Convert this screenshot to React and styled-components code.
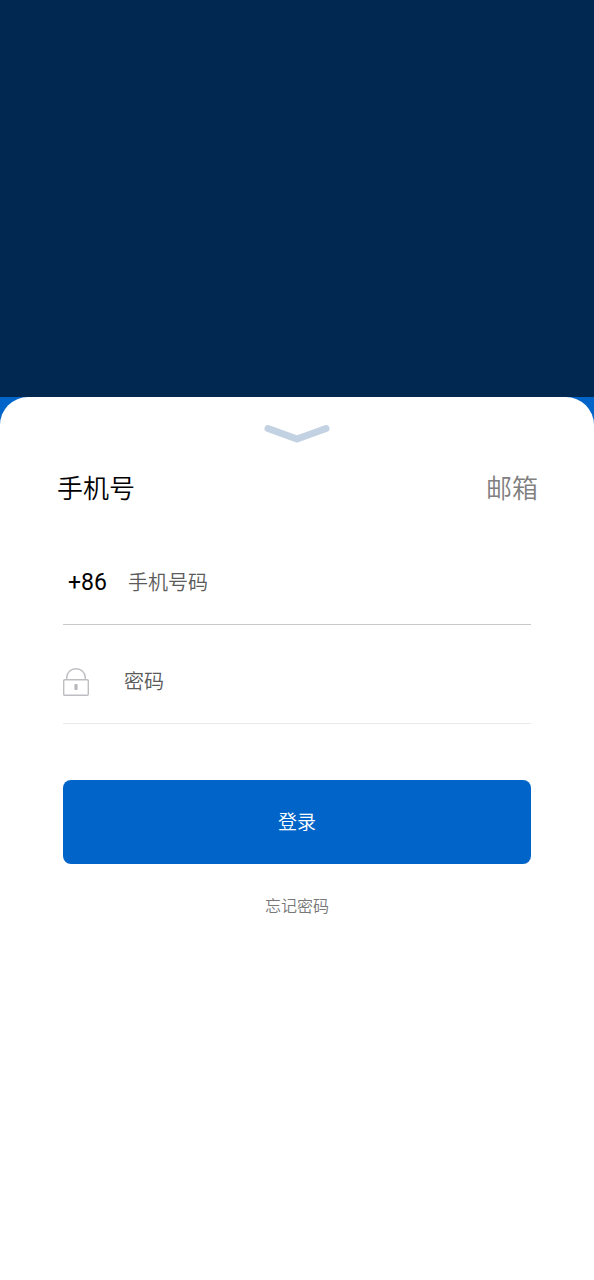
import React, { useState } from "react";
import styled, { createGlobalStyle } from "styled-components";

const GlobalStyle = createGlobalStyle`
  * { box-sizing: border-box; }
  body { margin: 0; background: #0064c8; }
  body, button, input {
    font-family: Roboto, "Noto Sans CJK SC", sans-serif;
  }
`;

const Page = styled.main`
  display: flex;
  flex-direction: column;
  min-height: 100vh;
`;

const Banner = styled.header`
  flex: none;
  height: 31vh;
  background: #002850;
`;

const Sheet = styled.section`
  flex: 1;
  display: flex;
  flex-direction: column;
  align-items: stretch;
  padding-top: 24px;
  background: #fff;
  border-radius: 28px 28px 0 0;
`;

const PlainButton = styled.button`
  border: 0;
  padding: 0;
  background: none;
  cursor: pointer;
`;

const Collapse = styled(PlainButton)`
  align-self: center;
  height: 24px;
  svg { display: block; }
`;

const Tabs = styled.div`
  display: flex;
  justify-content: space-between;
  margin-top: 24px;
  padding: 0 56px 0 57px;
`;

const Tab = styled(PlainButton)`
  font-size: 26px;
  font-weight: 350;
  line-height: 40px;
  color: ${(p) => (p.$active ? "#000" : "#808080")};
`;

const Form = styled.form`
  display: flex;
  flex-direction: column;
  padding: 0 63px;
  margin-top: 17px;
`;

const Field = styled.div`
  display: flex;
  align-items: center;
  height: 83px;
  margin-top: 16px;
  border-bottom: 1px solid ${(p) => p.$line};
`;

const Lead = styled.label`
  flex: none;
  width: ${(p) => p.$width}px;
  padding-left: ${(p) => p.$inset || 0}px;
  font-size: 23px;
  line-height: 32px;
  color: #000;
  svg { display: block; }
`;

const Input = styled.input`
  flex: 1;
  min-width: 0;
  height: 48px;
  padding: 0;
  border: 0;
  outline: 0;
  background: transparent;
  font-size: 20px;
  font-weight: 350;
  color: #000;
  &::placeholder { color: #5a5a5a; opacity: 1; }
`;

const Submit = styled.button`
  height: 84px;
  margin-top: 56px;
  padding: 0 0 2px;
  border: 0;
  border-radius: 8px;
  background: #0064c8;
  color: #fff;
  font-size: 19px;
  font-weight: 350;
  cursor: pointer;
`;

const Forgot = styled.a`
  align-self: center;
  margin-top: 31px;
  font-size: 16px;
  font-weight: 350;
  line-height: 24px;
  color: #787878;
  text-decoration: none;
`;

function ChevronIcon() {
  return (
    <svg width="66" height="24" viewBox="0 0 66 24" fill="none" aria-hidden="true">
      <path d="M4 7.5 L33 18 L62 7.5" stroke="#c3d2e2" strokeWidth="7" strokeLinecap="round" strokeLinejoin="miter" />
    </svg>
  );
}

function LockIcon() {
  return (
    <svg width="26" height="28" viewBox="0 0 26 28" fill="none" stroke="#bebec2" strokeWidth="1.4" aria-hidden="true">
      <rect x="0.7" y="11.7" width="24.6" height="15.6" rx="1" />
      <path d="M3.7 11.5 V9.6 a9.3 8.9 0 0 1 18.6 0 V11.5" />
      <rect x="11.4" y="16" width="3.2" height="6" rx="0.8" fill="#b9b9bd" stroke="none" />
    </svg>
  );
}

export default function App() {
  const [tab, setTab] = useState("phone");
  return (
    <Page>
      <GlobalStyle />
      <Banner />
      <Sheet>
        <Collapse type="button" aria-label="收起">
          <ChevronIcon />
        </Collapse>
        <Tabs role="tablist">
          <Tab type="button" role="tab" aria-selected={tab === "phone"} $active={tab === "phone"} onClick={() => setTab("phone")}>
            手机号
          </Tab>
          <Tab type="button" role="tab" aria-selected={tab === "email"} $active={tab === "email"} onClick={() => setTab("email")}>
            邮箱
          </Tab>
        </Tabs>
        <Form onSubmit={(e) => e.preventDefault()}>
          <Field $line="#c8c8c8">
            <Lead htmlFor="phone" $width={65} $inset={5}>+86</Lead>
            <Input id="phone" type="tel" placeholder="手机号码" />
          </Field>
          <Field $line="#e9e9e9">
            <Lead htmlFor="password" aria-label="密码" $width={61}>
              <LockIcon />
            </Lead>
            <Input id="password" type="password" placeholder="密码" />
          </Field>
          <Submit type="submit">登录</Submit>
          <Forgot href="#forgot">忘记密码</Forgot>
        </Form>
      </Sheet>
    </Page>
  );
}
